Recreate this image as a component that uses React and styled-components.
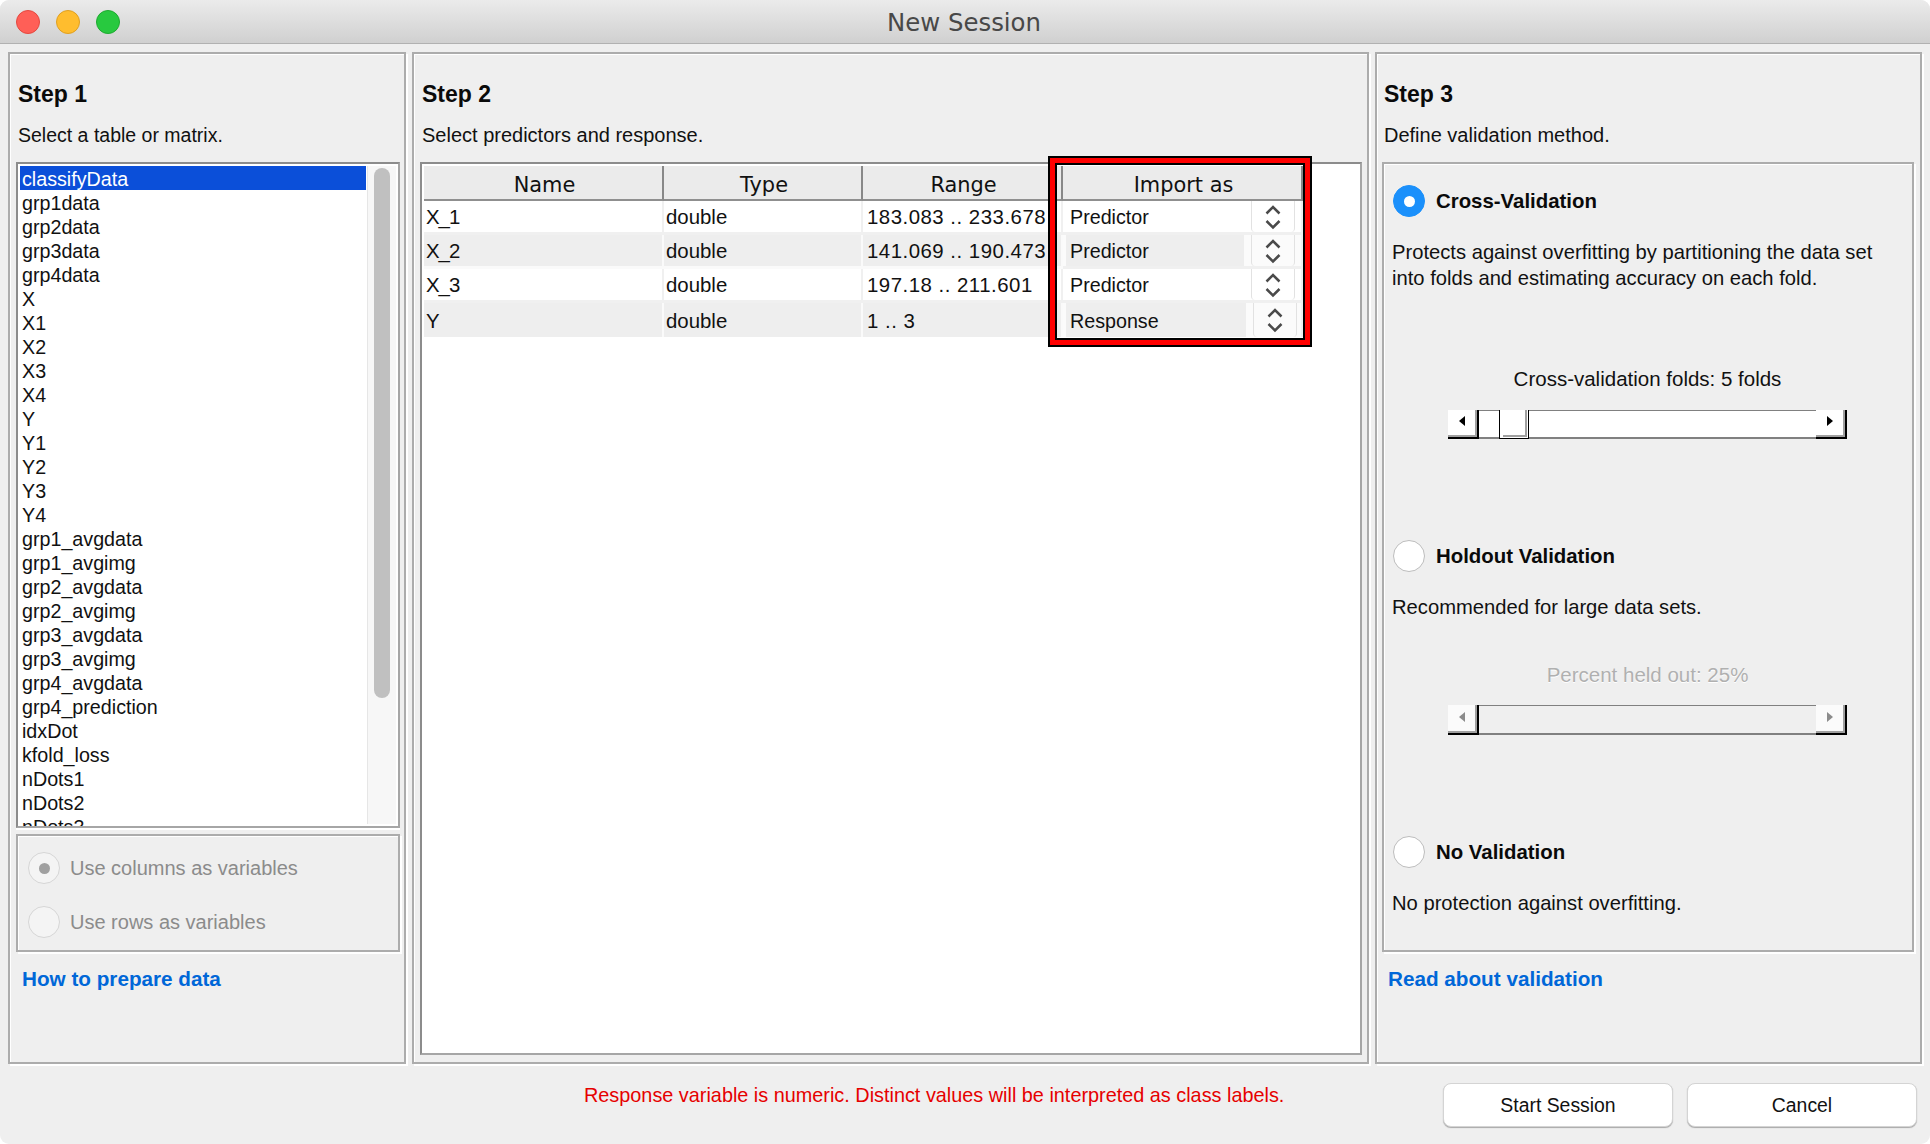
import React from 'react'
import styled, { createGlobalStyle } from 'styled-components'

const GlobalStyle = createGlobalStyle`
  html, body {
    margin: 0;
    padding: 0;
    background: #fff;
  }
  * {
    box-sizing: border-box;
  }
`

const Window = styled.div`
  width: 1930px;
  height: 1144px;
  display: flex;
  flex-direction: column;
  background: #efefef;
  border-radius: 9px;
  overflow: hidden;
  font-family: "Liberation Sans", Arial, sans-serif;
  font-size: 20px;
  color: #111;
`

const TitleBar = styled.div`
  height: 44px;
  flex: none;
  display: flex;
  align-items: center;
  position: relative;
  padding-left: 16px;
  gap: 16px;
  background: linear-gradient(#ebebeb, #d0d0d0);
  border-bottom: 1px solid #b1b1b1;
`

const Light = styled.span`
  width: 24px;
  height: 24px;
  border-radius: 50%;
  background: ${p => p.$color};
  border: 1px solid ${p => p.$edge};
`

const Title = styled.div`
  position: absolute;
  left: 0;
  right: 2px;
  top: 8px;
  text-align: center;
  font-family: "DejaVu Sans", sans-serif;
  font-size: 24.4px;
  line-height: 30px;
  color: #484848;
`

const Main = styled.div`
  flex: none;
  display: flex;
  gap: 6px;
  padding: 8px 0 0 8px;
`

const Panel = styled.section`
  width: ${p => p.$width}px;
  height: 1012px;
  flex: none;
  display: flex;
  flex-direction: column;
  padding: 0 4px 0 ${p => p.$pad || 6}px;
  border: 2px solid #acacac;
  box-shadow: inset 1px 1px 0 #fff, 2px 2px 0 #fff;
`

const StepHead = styled.header`
  height: 108px;
  flex: none;
  padding: 24px 0 0 2px;
`

const StepTitle = styled.h2`
  margin: 0;
  font-size: 23px;
  line-height: 32px;
  font-weight: 700;
  color: #0a0a0a;
`

const StepHint = styled.p`
  margin: 12px 0 0;
  line-height: 26px;
  font-size: ${p => p.$size || 20}px;
`

const ListBox = styled.div`
  height: 666px;
  flex: none;
  display: flex;
  overflow: hidden;
  padding: 2px;
  background: #fff;
  border: 2px solid #8c8c8c;
  border-right-color: #a6a6a6;
  border-bottom-color: #a6a6a6;
  box-shadow: 0 2px 0 #fff;
`

const ListItems = styled.div`
  width: 346px;
  flex: none;
`

const ListItem = styled.div`
  height: 24px;
  line-height: 27px;
  padding-left: 2px;
  font-size: 19.7px;
  white-space: nowrap;
  color: ${p => (p.$selected ? '#fff' : '#111')};
  background: ${p => (p.$selected ? '#0b4fd9' : 'transparent')};
`

const ScrollTrack = styled.div`
  flex: 1;
  margin-left: 1px;
  padding: 2px 0 0 6px;
  background: #f7f7f7;
  border-left: 1px solid #e6e6e6;
`

const ScrollThumb = styled.div`
  width: 16px;
  height: 530px;
  border-radius: 8px;
  background: #c0c0c0;
`

const RadioGroup = styled.div`
  height: 118px;
  flex: none;
  margin-top: 6px;
  padding: 16px 0 0 10px;
  display: flex;
  flex-direction: column;
  gap: 22px;
  border: 2px solid #acacac;
  box-shadow: inset 1px 1px 0 #fff, 2px 2px 0 #fff;
`

const RadioRow = styled.label`
  display: flex;
  align-items: center;
  gap: ${p => p.$gap}px;
  margin-left: ${p => (p.$bold ? 3 : 0)}px;
  font-size: ${p => (p.$bold ? 20.4 : 20)}px;
  font-weight: ${p => (p.$bold ? 700 : 400)};
  color: ${p => (p.$muted ? '#8b8b8b' : '#0a0a0a')};
`

const radioFill = p => {
  if (p.$muted) return '#f4f4f4'
  return p.$on ? '#1b90fb' : '#fff'
}

const radioEdge = p => {
  if (p.$muted) return '#d6d6d6'
  return p.$on ? '#1b90fb' : '#bdbdbd'
}

const Radio = styled.span`
  width: 32px;
  height: 32px;
  flex: none;
  display: flex;
  align-items: center;
  justify-content: center;
  border-radius: 50%;
  background: ${radioFill};
  border: 1px solid ${radioEdge};
  &::after {
    content: '';
    display: ${p => (p.$on ? 'block' : 'none')};
    width: 11px;
    height: 11px;
    border-radius: 50%;
    background: ${p => (p.$muted ? '#a0a0a0' : '#fff')};
  }
`

const HelpLink = styled.a`
  display: block;
  margin: 14px 0 0 6px;
  line-height: 26px;
  font-size: 20.7px;
  font-weight: 700;
  color: #0067d8;
`

const TableBox = styled.div`
  height: 893px;
  width: 942px;
  flex: none;
  position: relative;
  padding: 2px;
  background: #fff;
  border: 2px solid #8c8c8c;
  border-right-color: #a6a6a6;
  border-bottom-color: #a6a6a6;
`

const GridRow = styled.div`
  display: grid;
  grid-template-columns: 240px 199px 200px 240px;
  width: 879px;
`

const HeadCell = styled.div`
  height: 35px;
  padding: 3px 0 0 3px;
  text-align: center;
  font-family: "DejaVu Sans", sans-serif;
  font-size: 20.9px;
  line-height: 32px;
  color: #111;
  background: #ebebeb;
  border-right: 2px solid #888;
  border-bottom: 2px solid #8f8f8f;
`

const Cell = styled.div`
  height: 34px;
  padding: 1px 0 0 ${p => (p.$wide ? 4 : 2)}px;
  display: flex;
  align-items: center;
  font-size: 20.4px;
  line-height: 26px;
  letter-spacing: ${p => (p.$wide ? '0.5px' : p.$tight ? '-1px' : '0')};
  white-space: nowrap;
  background: ${p => (p.$alt ? '#eee' : '#fff')};
  border-right: 2px solid ${p => (p.$alt ? '#fafafa' : '#f0f0f0')};
  border-bottom: ${p => (p.$last ? 0 : 3)}px solid ${p => (p.$alt ? '#fafafa' : '#f0f0f0')};
  background-clip: padding-box;
`

const ImportCell = styled.div`
  height: 34px;
  display: flex;
  padding-left: 3px;
  background: ${p => (p.$alt ? '#fbfbfb' : '#fff')};
  border-right: 2px solid #f0f0f0;
  border-bottom: ${p => (p.$last ? 0 : 3)}px solid #f0f0f0;
`

const ImportValue = styled.div`
  width: ${p => (p.$last ? 180 : 178)}px;
  flex: none;
  padding: 2px 0 0 4px;
  font-size: 19.7px;
  line-height: ${p => (p.$last ? 33 : 28)}px;
  background: ${p => (p.$alt ? '#eee' : 'transparent')};
`

const Spinner = styled.div`
  width: 44px;
  flex: none;
  margin-left: 7px;
  display: flex;
  align-items: center;
  justify-content: center;
  border: 1px solid #e2e2e2;
  border-top: 0;
  border-bottom: 0;
  border-radius: 0 0 4px 4px;
`

const Highlight = styled.div`
  position: absolute;
  left: 626px;
  top: -8px;
  width: 264px;
  height: 191px;
  pointer-events: none;
  border: 2px solid #000;
  box-shadow: inset 0 0 0 5px #f00, inset 0 0 0 7px #000;
`

const ValidationBox = styled.div`
  height: 790px;
  flex: none;
  display: grid;
  grid-template-rows: 355px 296px 1fr;
  padding: 21px 0 0 6px;
  margin-right: 2px;
  border: 2px solid #acacac;
  box-shadow: inset 1px 1px 0 #fff, 2px 2px 0 #fff;
`

const Method = styled.div`
  display: flex;
  flex-direction: column;
`

const MethodText = styled.p`
  margin: 22px 0 0 2px;
  line-height: 26px;
  font-size: 20.2px;
  white-space: nowrap;
`

const SliderLabel = styled.div`
  width: 399px;
  margin: ${p => p.$top}px 0 0 58px;
  text-align: center;
  line-height: 26px;
  font-size: 20.5px;
  color: ${p => (p.$off ? '#b0b0b0' : '#111')};
  text-shadow: ${p => (p.$off ? '0 1px 0 #fff' : 'none')};
`

const Slider = styled.div`
  width: 399px;
  height: ${p => (p.$off ? 30 : 29)}px;
  margin: ${p => (p.$off ? 17 : 18)}px 0 0 58px;
  display: flex;
  background: ${p => (p.$off ? 'transparent' : '#fff')};
`

const SliderEnd = styled.div`
  width: 31px;
  flex: none;
  display: flex;
  align-items: center;
  justify-content: center;
  padding: 0 2px 5px 0;
  background: ${p => (p.$off ? '#fbfbfb' : '#fff')};
  border-right: 2px solid #000;
  border-bottom: 2px solid #000;
  box-shadow: inset -2px -2px 0 #a0a0a0;
`

const Arrow = styled.span`
  width: 0;
  height: 0;
  border-top: 5px solid transparent;
  border-bottom: 5px solid transparent;
  border-${p => (p.$right ? 'left' : 'right')}: 6px solid ${p => (p.$off ? '#8c8c8c' : '#000')};
`

const SliderTrack = styled.div`
  flex: 1;
  padding-left: 20px;
  border-top: 1px solid #808080;
  border-bottom: 2px solid #808080;
`

const SliderThumb = styled.div`
  width: 30px;
  height: 29px;
  margin-top: -1px;
  background: #fff;
  border: 1px solid #000;
  border-top: 0;
  box-shadow: inset 3px 0 0 #fff, inset -1px -1px 0 #fff, inset -3px -3px 0 #a0a0a0;
`

const Footer = styled.footer`
  flex: 1;
  display: flex;
  padding: 19px 13px 0 584px;
`

const Message = styled.div`
  flex: 1;
  font-size: 19.85px;
  line-height: 24px;
  color: #e60000;
`

const ActionButton = styled.button`
  width: 230px;
  height: 44px;
  margin-left: ${p => (p.$first ? 0 : 14)}px;
  font-family: inherit;
  font-size: 19.4px;
  color: #111;
  background: #fff;
  border: 1px solid #d4d4d4;
  border-radius: 8px;
  box-shadow: 0 1px 1px #a8a8a8;
`

const dataNames = [
  'classifyData', 'grp1data', 'grp2data', 'grp3data', 'grp4data', 'X', 'X1', 'X2', 'X3', 'X4',
  'Y', 'Y1', 'Y2', 'Y3', 'Y4', 'grp1_avgdata', 'grp1_avgimg', 'grp2_avgdata', 'grp2_avgimg',
  'grp3_avgdata', 'grp3_avgimg', 'grp4_avgdata', 'grp4_prediction', 'idxDot', 'kfold_loss',
  'nDots1', 'nDots2', 'nDots3'
]

const predictors = [
  { name: 'X_1', type: 'double', range: '183.083 .. 233.678', role: 'Predictor' },
  { name: 'X_2', type: 'double', range: '141.069 .. 190.473', role: 'Predictor' },
  { name: 'X_3', type: 'double', range: '197.18 .. 211.601', role: 'Predictor' },
  { name: 'Y', type: 'double', range: '1 .. 3', role: 'Response' }
]

function Chevrons () {
  return (
    <svg width="16" height="28" viewBox="0 0 16 28" fill="none" stroke="#4a4a4a" strokeWidth="2.5">
      <polyline points="1.5,10.5 8,4 14.5,10.5" />
      <polyline points="1.5,18 8,24.5 14.5,18" />
    </svg>
  )
}

function ScrollSlider ({ off }) {
  return (
    <Slider $off={off}>
      <SliderEnd $off={off}><Arrow $off={off} /></SliderEnd>
      <SliderTrack>{!off && <SliderThumb />}</SliderTrack>
      <SliderEnd $off={off}><Arrow $off={off} $right /></SliderEnd>
    </Slider>
  )
}

function App () {
  return (
    <Window>
      <GlobalStyle />
      <TitleBar>
        <Light $color="#ff5f57" $edge="#e5483f" />
        <Light $color="#ffbd2e" $edge="#e0a020" />
        <Light $color="#28c93f" $edge="#1eaa30" />
        <Title>New Session</Title>
      </TitleBar>
      <Main>
        <Panel $width={398}>
          <StepHead>
            <StepTitle>Step 1</StepTitle>
            <StepHint $size={19.5}>Select a table or matrix.</StepHint>
          </StepHead>
          <ListBox>
            <ListItems>
              {dataNames.map((name, i) => (
                <ListItem key={name} $selected={i === 0}>{name}</ListItem>
              ))}
            </ListItems>
            <ScrollTrack><ScrollThumb /></ScrollTrack>
          </ListBox>
          <RadioGroup>
            <RadioRow $gap={10} $muted><Radio $on $muted />Use columns as variables</RadioRow>
            <RadioRow $gap={10} $muted><Radio $muted />Use rows as variables</RadioRow>
          </RadioGroup>
          <HelpLink>How to prepare data</HelpLink>
        </Panel>

        <Panel $width={957}>
          <StepHead>
            <StepTitle>Step 2</StepTitle>
            <StepHint>Select predictors and response.</StepHint>
          </StepHead>
          <TableBox>
            <GridRow>
              <HeadCell>Name</HeadCell>
              <HeadCell>Type</HeadCell>
              <HeadCell>Range</HeadCell>
              <HeadCell>Import as</HeadCell>
            </GridRow>
            {predictors.map((row, i) => {
              const alt = i % 2 === 1
              const last = i === predictors.length - 1
              return (
                <GridRow key={row.name}>
                  <Cell $alt={alt} $last={last} $tight>{row.name}</Cell>
                  <Cell $alt={alt} $last={last}>{row.type}</Cell>
                  <Cell $alt={alt} $last={last} $wide>{row.range}</Cell>
                  <ImportCell $alt={alt} $last={last}>
                    <ImportValue $alt={alt} $last={last}>{row.role}</ImportValue>
                    <Spinner><Chevrons /></Spinner>
                  </ImportCell>
                </GridRow>
              )
            })}
            <Highlight />
          </TableBox>
        </Panel>

        <Panel $width={547} $pad={5}>
          <StepHead>
            <StepTitle>Step 3</StepTitle>
            <StepHint>Define validation method.</StepHint>
          </StepHead>
          <ValidationBox>
            <Method>
              <RadioRow $gap={11} $bold><Radio $on />Cross-Validation</RadioRow>
              <MethodText>
                Protects against overfitting by partitioning the data set<br />
                into folds and estimating accuracy on each fold.
              </MethodText>
              <SliderLabel $top={75}>Cross-validation folds: 5 folds</SliderLabel>
              <ScrollSlider />
            </Method>
            <Method>
              <RadioRow $gap={11} $bold><Radio />Holdout Validation</RadioRow>
              <MethodText>Recommended for large data sets.</MethodText>
              <SliderLabel $off $top={42}>Percent held out: 25%</SliderLabel>
              <ScrollSlider off />
            </Method>
            <Method>
              <RadioRow $gap={11} $bold><Radio />No Validation</RadioRow>
              <MethodText>No protection against overfitting.</MethodText>
            </Method>
          </ValidationBox>
          <HelpLink>Read about validation</HelpLink>
        </Panel>
      </Main>
      <Footer>
        <Message>Response variable is numeric. Distinct values will be interpreted as class labels.</Message>
        <ActionButton $first>Start Session</ActionButton>
        <ActionButton>Cancel</ActionButton>
      </Footer>
    </Window>
  )
}

export default App
